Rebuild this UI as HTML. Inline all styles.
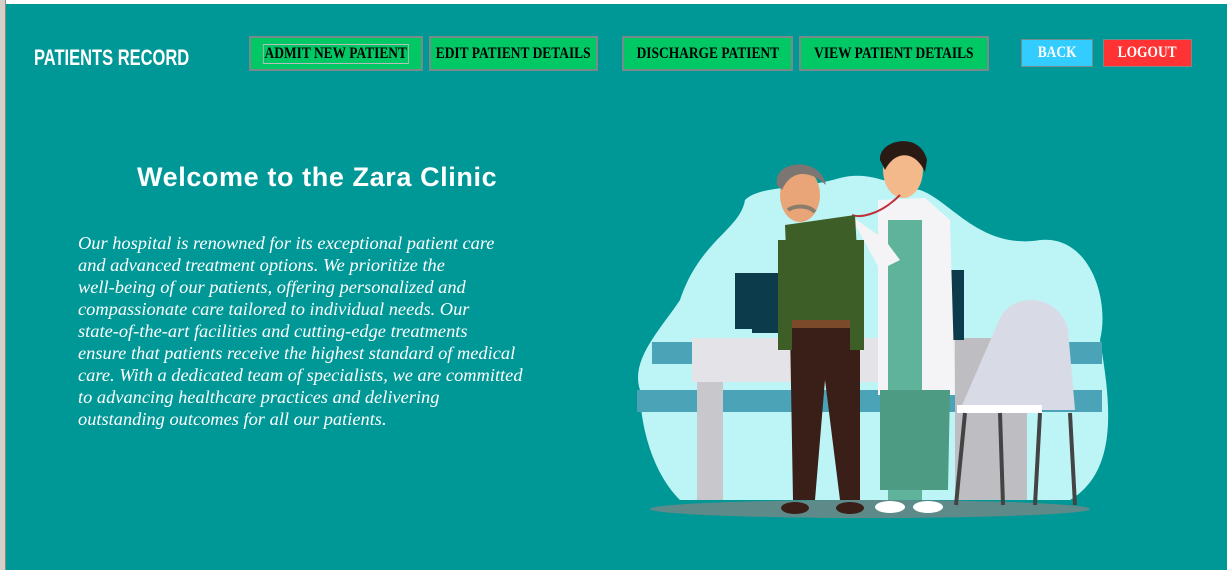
<!DOCTYPE html>
<html><head><meta charset="utf-8"><style>
*{margin:0;padding:0;box-sizing:border-box}
body{width:1227px;height:570px;overflow:hidden;background:#009797;position:relative;font-family:"Liberation Serif",serif}
.top{position:absolute;left:0;top:0;width:1227px;height:4px;background:#fff}
.left{position:absolute;left:0;top:0;width:6px;height:570px;background:#d4d0c8;border-right:1px solid #888}
.title{position:absolute;left:34px;top:45px;color:#fff;font:bold 22px "Liberation Sans",sans-serif;transform:scaleX(0.75);transform-origin:left top;white-space:nowrap}
.btn{position:absolute;top:36px;height:35px;background:#00c864;border:2px solid #7a8a8a;color:#000;display:flex;align-items:center;justify-content:center}
.btn span,.sb span{display:inline-block;font:bold 16px "Liberation Serif",serif;transform:scaleX(0.84);white-space:nowrap}
.sb{position:absolute;top:39px;height:28px;border:1px solid #7a8a8a;color:#fff;display:flex;align-items:center;justify-content:center}
h1{position:absolute;left:137px;top:162px;color:#fff;font:bold 27px "Liberation Sans",sans-serif;letter-spacing:0.6px;white-space:nowrap}
p{position:absolute;left:78px;top:232px;color:#fff;font:italic 18.4px/22px "Liberation Serif",serif;white-space:nowrap}
</style></head><body>
<div class="top"></div><div class="left"></div>
<div class="title">PATIENTS RECORD</div>
<div class="btn" style="left:249px;width:174px"><span style="outline:1px solid #bbb;padding:0 1px">ADMIT NEW PATIENT</span></div>
<div class="btn" style="left:429px;width:169px"><span>EDIT PATIENT DETAILS</span></div>
<div class="btn" style="left:622px;width:171px"><span>DISCHARGE PATIENT</span></div>
<div class="btn" style="left:799px;width:190px"><span>VIEW PATIENT DETAILS</span></div>
<div class="sb" style="left:1021px;width:72px;background:#33ccff"><span>BACK</span></div>
<div class="sb" style="left:1103px;width:89px;background:#ff3333"><span>LOGOUT</span></div>
<h1>Welcome to the Zara Clinic</h1>
<p>Our hospital is renowned for its exceptional patient care<br>and advanced treatment options. We prioritize the<br>well-being of our patients, offering personalized and<br>compassionate care tailored to individual needs. Our<br>state-of-the-art facilities and cutting-edge treatments<br>ensure that patients receive the highest standard of medical<br>care. With a dedicated team of specialists, we are committed<br>to advancing healthcare practices and delivering<br>outstanding outcomes for all our patients.</p>
<svg style="position:absolute;left:0;top:0" width="1227" height="570">
<path d="M680 300 C700 240 740 230 745 200 C760 185 800 190 840 178 C870 170 890 185 920 190 C950 200 980 250 1040 240 C1090 235 1110 300 1100 340 C1110 400 1120 470 1070 500 L680 500 C650 470 640 420 640 390 C630 360 660 330 680 300Z" fill="#bdf4f6"/>
<rect x="652" y="342" width="450" height="22" fill="#4aa3b6"/>
<rect x="637" y="390" width="465" height="22" fill="#4aa3b6"/>
<ellipse cx="870" cy="509" rx="220" ry="9" fill="#5e8a8a"/>
<rect x="735" y="273" width="46" height="56" fill="#0c3b4c"/>
<rect x="752" y="328" width="30" height="5" fill="#0c3b4c"/>
<rect x="692" y="338" width="350" height="44" fill="#e4e4e8"/>
<rect x="697" y="382" width="26" height="118" fill="#c8c8cc"/>
<rect x="955" y="338" width="72" height="162" fill="#bebec2"/>
<rect x="944" y="270" width="20" height="70" fill="#0c3b4c"/>
<path d="M1000 318 C1015 290 1060 295 1068 330 L1075 410 L960 410 Z" fill="#d8dbe6"/>
<rect x="957" y="405" width="85" height="8" fill="#fff"/>
<path d="M965 413 L956 505 M1000 413 L1003 505 M1040 413 L1035 505 M1070 413 L1075 505" stroke="#444" stroke-width="4"/>
<path d="M878 200 L925 198 L950 220 L955 395 L878 395Z" fill="#f4f4f6"/>
<rect x="888" y="220" width="34" height="280" fill="#5fb39a"/>
<path d="M880 390 L950 390 L948 490 L880 490Z" fill="#4e9b83"/>
<ellipse cx="890" cy="507" rx="15" ry="6" fill="#fff"/><ellipse cx="928" cy="507" rx="15" ry="6" fill="#fff"/>
<ellipse cx="903" cy="170" rx="20" ry="28" fill="#f3b98a"/>
<path d="M880 160 C878 140 920 130 927 160 L925 172 C915 150 895 150 885 170Z" fill="#2a1a14"/>
<path d="M900 195 C880 215 860 218 852 215" stroke="#c0303a" stroke-width="2" fill="none"/>
<path d="M850 215 L885 240 L900 260 L880 270Z" fill="#f4f4f6"/>
<path d="M785 225 L855 215 L862 340 L790 345Z" fill="#3e5e28"/>
<rect x="783" y="320" width="80" height="8" fill="#7a4a2a"/>
<path d="M790 328 L860 328 L860 500 L840 500 L825 380 L815 500 L793 500Z" fill="#3a1e18"/>
<ellipse cx="795" cy="508" rx="14" ry="6" fill="#3a1e18"/><ellipse cx="850" cy="508" rx="14" ry="6" fill="#3a1e18"/>
<rect x="778" y="240" width="14" height="110" fill="#3e5e28"/><rect x="850" y="240" width="14" height="110" fill="#3e5e28"/>
<ellipse cx="800" cy="195" rx="20" ry="27" fill="#e9a577"/>
<path d="M777 185 C772 160 820 155 826 185 L820 180 C805 170 790 172 782 190Z" fill="#7b7672"/>
<path d="M788 210 C795 205 808 205 815 212" stroke="#8b7d6c" stroke-width="4" fill="none"/>
</svg>
</body></html>
